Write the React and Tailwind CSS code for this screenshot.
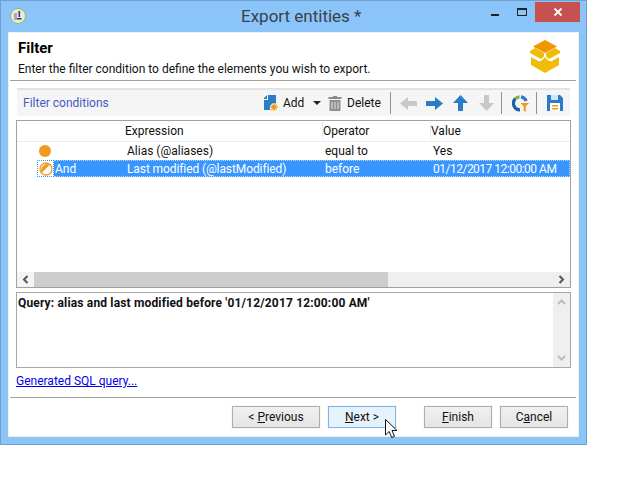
import React from 'react';

function AppIcon() {
  return (
    <svg width="18" height="18" viewBox="0 0 18 18" className="ml-[8px] mt-[6px] shrink-0">
      <circle cx="9" cy="9" r="7.5" fill="#e8e8e8" stroke="#8fc04a" strokeWidth="1" />
      <path d="M5 6h3v7H5z" fill="#a8a8a8" />
      <path d="M9.5 4h1.6v6H9.5zM8 11h4.5v1.6H8z" fill="#3c3c3c" />
    </svg>
  );
}

function WindowButtons() {
  return (
    <div className="flex items-start ml-auto">
      <div className="w-[8px] h-[2px] bg-[#222] mt-[13px] mr-[18px]" />
      <div className="w-[10px] h-[8px] border border-[#222] border-t-2 mt-[7px] mr-[8px]" />
      <div className="w-[45px] h-[20px] mt-px mr-[6px] bg-[#c75050] flex items-center justify-center">
        <svg width="10" height="10" viewBox="0 0 10 10">
          <path d="M1.5 1.5l7 7M8.500 1.500l-7 7" stroke="#fff" strokeWidth="1.800" />
        </svg>
      </div>
    </div>
  );
}

function BoxLogo() {
  return (
    <svg width="32" height="33" viewBox="0 0 32 33">
      <path d="M16 0l12 6.500-12 6.500L4 6.500z" fill="#ef9600" />
      <path d="M1 11l5-3 9 5v3.500L12 19 1 13zM31 11l-5-3-9 5v3.500L20 19l11-6z" fill="#f0bc05" />
      <path d="M2 17l8 4.500 3.500-1.500 2.500-3 2.500 3 3.500 1.500 8-4.500v8L16 33 2 25z" fill="#f0bc05" />
    </svg>
  );
}

function AddIcon() {
  return (
    <svg width="14" height="16" viewBox="0 0 14 16">
      <path d="M0 3l3-3v4H0zM4 0h8v8.500A4.500 4.500 0 0 0 6.500 15H0V5h4z" fill="#2a7cc7" />
      <circle cx="10" cy="12" r="2.600" fill="#f39a1c" />
      <path d="M10 8v8M6 12h8M7.300 9.300l5.400 5.400M12.700 9.300l-5.400 5.400" stroke="#f39a1c" strokeWidth="1" />
    </svg>
  );
}

function TrashIcon() {
  return (
    <svg width="14" height="16" viewBox="0 0 14 16">
      <path d="M5 1h4v1h4.500v2H.5V2H5z" fill="#8a8a8a" />
      <path d="M1.500 5h11v11h-11z" fill="#8f8f8f" />
      <path d="M4 7v7M7 7v7M10 7v7" stroke="#d6d6d6" strokeWidth="1.200" />
    </svg>
  );
}

function ArrowRight({ color }) {
  return (
    <svg width="17" height="13" viewBox="0 0 17 13">
      <path d="M0 4h9V0l8 6.500L9 13V9H0z" fill={color} />
    </svg>
  );
}

function ArrowLeft({ color }) {
  return (
    <svg width="17" height="13" viewBox="0 0 17 13">
      <path d="M17 4H8V0L0 6.500 8 13V9h9z" fill={color} />
    </svg>
  );
}

function ArrowUp({ color }) {
  return (
    <svg width="15" height="16" viewBox="0 0 15 16">
      <path d="M5 16V8H0l7.500-8L15 8h-5v8z" fill={color} />
    </svg>
  );
}

function ArrowDown({ color }) {
  return (
    <svg width="15" height="16" viewBox="0 0 15 16">
      <path d="M5 0v8H0l7.500 8L15 8h-5V0z" fill={color} />
    </svg>
  );
}

function RefreshFilter() {
  return (
    <svg width="17" height="17" viewBox="0 0 17 17" fill="none">
      <path d="M8 14.800A6.500 6.500 0 0 1 3.400 3.700" stroke="#1f5f9e" strokeWidth="3.200" />
      <path d="M3.400 3.700A6.500 6.500 0 0 1 7.500 1.800" stroke="#7cb342" strokeWidth="3.200" />
      <path d="M9 1.800A6.500 6.500 0 0 1 14.200 6" stroke="#2a7cc7" strokeWidth="3.200" />
      <path d="M8.500 8h8.500l-3.200 3.500V17l-2.100-1.200v-4.300z" fill="#f39a1c" />
    </svg>
  );
}

function SaveIcon() {
  return (
    <svg width="16" height="16" viewBox="0 0 16 16">
      <path d="M0 0h13l3 3v13H0z" fill="#2a7cc7" />
      <path d="M4 0h7v5H4z" fill="#cfe4f7" />
      <path d="M3 8h10v8H3z" fill="#fff" />
      <path d="M5 10h6v1.500H5zM5 13h6v1.500H5z" fill="#f39a1c" />
    </svg>
  );
}

function Sep() {
  return <div className="w-px h-[22px] bg-[#909090]" />;
}

function Toolbar() {
  return (
    <div className="mt-[7px] ml-[8px] w-[553px] h-[28px] bg-[#f5f5f5] border-t-2 border-[#e2e2e2] flex items-center text-[12px] text-[#111] whitespace-nowrap">
      <span className="ml-[6px] text-[#3f5cc4]">Filter conditions</span>
      <div className="ml-auto"><AddIcon /></div>
      <span className="ml-[5px] w-[30px]">Add</span>
      <div className="w-0 h-0 border-x-[4px] border-x-transparent border-t-[4px] border-t-[#222]" />
      <div className="ml-[7px]"><TrashIcon /></div>
      <span className="ml-[5px] w-[33px]">Delete</span>
      <div className="ml-[10px]"><Sep /></div>
      <div className="ml-[9px]"><ArrowLeft color="#c8c8c8" /></div>
      <div className="ml-[9px]"><ArrowRight color="#2a7cc7" /></div>
      <div className="ml-[10px]"><ArrowUp color="#2a7cc7" /></div>
      <div className="ml-[11px]"><ArrowDown color="#c8c8c8" /></div>
      <div className="ml-[7px]"><Sep /></div>
      <div className="ml-[10px]"><RefreshFilter /></div>
      <div className="ml-[7px]"><Sep /></div>
      <div className="ml-[10px] mr-[7px]"><SaveIcon /></div>
    </div>
  );
}

function RowIcon() {
  return (
    <svg width="14" height="14" viewBox="0 0 14 14">
      <circle cx="7" cy="7" r="6" fill="#fff" stroke="#f09a20" strokeWidth="1.300" />
      <path d="M2.800 10.800A6 6 0 0 1 10.800 2.800z" fill="#f09a20" />
    </svg>
  );
}

function ConditionsTable() {
  return (
    <div className="mt-[4px] ml-[7px] w-[555px] h-[168px] border border-[#a0a0a8] flex flex-col text-[12px] text-[#111] whitespace-nowrap">
      <div className="h-[21px] shrink-0 flex items-center border-b border-[#e3eef9]">
        <span className="ml-[108px] w-[197px]">Expression</span>
        <span className="w-[108px] border-l border-[#e3eef9]">Operator</span>
        <span className="border-l border-[#e3eef9]">Value</span>
      </div>
      <div className="h-[18px] shrink-0 flex items-center">
        <div className="ml-[22px] w-[12px] h-[12px] rounded-full bg-[#f09a20]" />
        <span className="ml-[76px] w-[198px]">Alias (@aliases)</span>
        <span className="w-[108px]">equal to</span>
        <span>Yes</span>
      </div>
      <div className="h-[17px] shrink-0 flex items-stretch">
        <div className="ml-[20px] w-[17px] border border-dotted border-[#3a96ff] flex items-center justify-center">
          <RowIcon />
        </div>
        <div className="flex-1 flex items-center bg-[#3a96ff] border-y border-r border-dotted border-white/60 text-white">
          <span className="ml-[1px] w-[72px]">And</span>
          <span className="w-[198px] tracking-[-0.1px]">Last modified (@lastModified)</span>
          <span className="w-[108px]">before</span>
          <span className="tracking-[-0.5px]">01/12/2017 12:00:00 AM</span>
        </div>
      </div>
      <div className="mt-auto h-[15px] bg-[#efefef] flex items-stretch">
        <div className="w-[17px] bg-[#f4f4f4] flex items-center justify-center">
          <svg width="7" height="9" viewBox="0 0 7 9"><path d="M5.500 1L2 4.500 5.500 8" fill="none" stroke="#555" strokeWidth="2" /></svg>
        </div>
        <div className="w-[354px] bg-[#cdcdcd]" />
        <div className="ml-auto w-[17px] flex items-center justify-center">
          <svg width="7" height="9" viewBox="0 0 7 9"><path d="M1.500 1L5 4.500 1.500 8" fill="none" stroke="#555" strokeWidth="2" /></svg>
        </div>
      </div>
    </div>
  );
}

function QueryBox() {
  return (
    <div className="mt-[4px] ml-[7px] w-[555px] h-[76px] border border-[#a8a8a8] flex text-[12px]">
      <div className="flex-1 pl-px font-bold text-[#111] leading-[17px] pt-[2px] tracking-[0.16px]">
        Query: alias and last modified before '01/12/2017 12:00:00 AM'
      </div>
      <div className="w-[17px] bg-[#efefef] flex flex-col items-center justify-between py-[6px]">
        <svg width="9" height="6" viewBox="0 0 9 6"><path d="M1 5l3.500-3.500L8 5" fill="none" stroke="#bdbdbd" strokeWidth="2" /></svg>
        <svg width="9" height="6" viewBox="0 0 9 6"><path d="M1 1l3.500 3.500L8 1" fill="none" stroke="#bdbdbd" strokeWidth="2" /></svg>
      </div>
    </div>
  );
}

function WizButton({ width, hover, children }) {
  return (
    <button
      className={
        'h-[22px] text-[12px] text-[#111] border flex items-center justify-center outline outline-1 whitespace-pre ' +
        (hover
          ? 'border-[#7eb4ea] bg-[#e5f1fb] outline-[#f2f8fd] '
          : 'border-[#adadad] bg-gradient-to-b from-[#f0f0f0] to-[#e5e5e5] outline-[#f7f7f7] ') +
        width
      }
    >
      {children}
    </button>
  );
}

function Cursor() {
  return (
    <svg width="13" height="20" viewBox="0 0 13 20" className="absolute left-[385px] top-[419px]">
      <path d="M.500 .500v15.500l3.700-3.500 2.500 6 2.800-1.200-2.500-5.800h5z" fill="#fff" stroke="#111" strokeWidth="1" />
    </svg>
  );
}

export default function App() {
  return (
    <div className="relative w-[619px] h-[478px] bg-white font-['Roboto',sans-serif]">
      <div className="w-[587px] h-[445px] bg-[#8bc4f9] border border-[#6f9fcf] flex flex-col">
        <div className="h-[31px] shrink-0 flex items-start">
          <AppIcon />
          <span className="ml-[214px] mt-[5px] text-[17px] leading-[20px] text-[#3a4148] whitespace-nowrap">Export entities *</span>
          <WindowButtons />
        </div>
        <div className="mx-[7px] w-[571px] h-[405px] bg-white border border-[#f0f0f0] flex flex-col">
          <div className="relative h-[47px] shrink-0 pl-[9px]">
            <div className="text-[15px] font-bold text-black leading-[20px] pt-[5px] h-[25px]">Filter</div>
            <div className="text-[12px] text-[#111] leading-[16px] mt-[3px]">Enter the filter condition to define the elements you wish to export.</div>
            <div className="absolute right-[17px] top-[7px]"><BoxLogo /></div>
          </div>
          <div className="ml-[1px] mr-[2px] h-px bg-[#a0a0a0]" />
          <Toolbar />
          <ConditionsTable />
          <QueryBox />
          <div className="ml-[7px] mt-[5px] text-[12px] leading-[16px] text-[#0000e6] underline">Generated SQL query...</div>
          <div className="mt-[8px] ml-[1px] mr-[2px] h-px bg-[#a0a0a0]" />
          <div className="mt-[8px] flex pl-[223px]">
            <WizButton width="w-[88px]">&lt; <u>P</u>revious</WizButton>
            <div className="w-[8px]" />
            <WizButton width="w-[68px]" hover><u>N</u>ext &gt;</WizButton>
            <div className="w-[28px]" />
            <WizButton width="w-[68px]"><u>F</u>inish</WizButton>
            <div className="w-[8px]" />
            <WizButton width="w-[68px]">C<u>a</u>ncel</WizButton>
          </div>
        </div>
      </div>
      <Cursor />
    </div>
  );
}
